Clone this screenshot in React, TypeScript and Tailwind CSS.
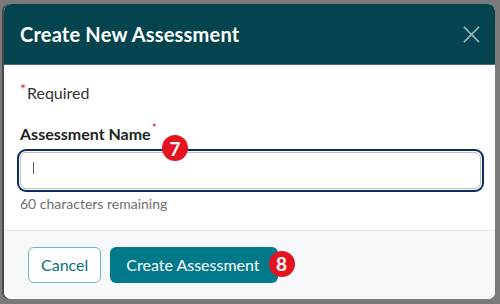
import React from 'react';

function StepBadge({ n }: { n: number }) {
    return (
        <span className="flex h-[26px] w-[26px] items-center justify-center rounded-full bg-[#e3141f] text-[19px] font-bold leading-none text-white">
            {n}
        </span>
    );
}

export default function App() {
    return (
        <div
            className="h-[304px] w-[500px] bg-[#7a7a7a] pl-[4px] pr-[5px] pt-[4px] pb-[5px]"
            style={{ fontFamily: 'Lato, "Open Sans", sans-serif' }}
        >
            <div className="flex h-full flex-col overflow-hidden rounded-[7px] bg-white shadow-[-2px_0_0_#4a4a4a]">
                {/* Header */}
                <div className="flex h-[61px] shrink-0 items-center justify-between border-b border-[#3f6f76] bg-[#03444e] pl-4 pr-[15px]">
                    <h2 className="text-[20px] font-bold tracking-[0.2px] text-white">Create New Assessment</h2>
                    <svg width="17" height="17" viewBox="0 0 18 18" className="text-[#93b6b9]">
                        <path d="M1 1L17 17M17 1L1 17" stroke="currentColor" strokeWidth="1.8" />
                    </svg>
                </div>

                {/* Body */}
                <div className="flex-1 px-4 pt-[16px]">
                    <p className="flex items-start text-[16px] text-[#333]">
                        <span className="mt-[1px] mr-[1px] text-[14px] leading-none text-[#e3141f]">*</span>
                        Required
                    </p>
                    <div className="relative mt-[17px]">
                        <label className="flex items-start text-[16px] font-bold text-[#222]">
                            Assessment Name
                            <span className="ml-[1px] mt-[-3px] text-[12px] font-normal text-[#e3141f]">*</span>
                        </label>
                        <div className="relative mt-[6px]">
                            <input
                                type="text"
                                className="block h-[37px] w-[461px] rounded-[6px] border border-[#bdbdbd] bg-white outline-none ring-2 ring-[#0c2a68] ring-offset-1"
                            />
                            <span className="absolute left-[13px] top-[10px] h-[12px] w-px bg-[#555]" />
                        </div>
                        <div className="absolute left-[142px] top-[13px]">
                            <StepBadge n={7} />
                        </div>
                        <p className="mt-[4px] text-[14px] text-[#6f6f6f]">60 characters remaining</p>
                    </div>
                </div>

                {/* Footer */}
                <div className="flex h-[69px] shrink-0 items-center gap-[9px] border-t border-[#e3e6ea] bg-[#f7f8fa] px-6">
                    <button className="h-[36px] rounded-[6px] border border-[#74b4c1] bg-white px-[12px] text-[16px] text-[#0b6f80]">
                        Cancel
                    </button>
                    <div className="flex items-center">
                        <button className="h-[36px] rounded-[6px] bg-[#007a8b] pl-[16px] pr-[18px] text-[16px] text-white">
                            Create Assessment
                        </button>
                        <div className="-ml-[9px] -mt-[3px]">
                            <StepBadge n={8} />
                        </div>
                    </div>
                </div>
            </div>
        </div>
    );
}
